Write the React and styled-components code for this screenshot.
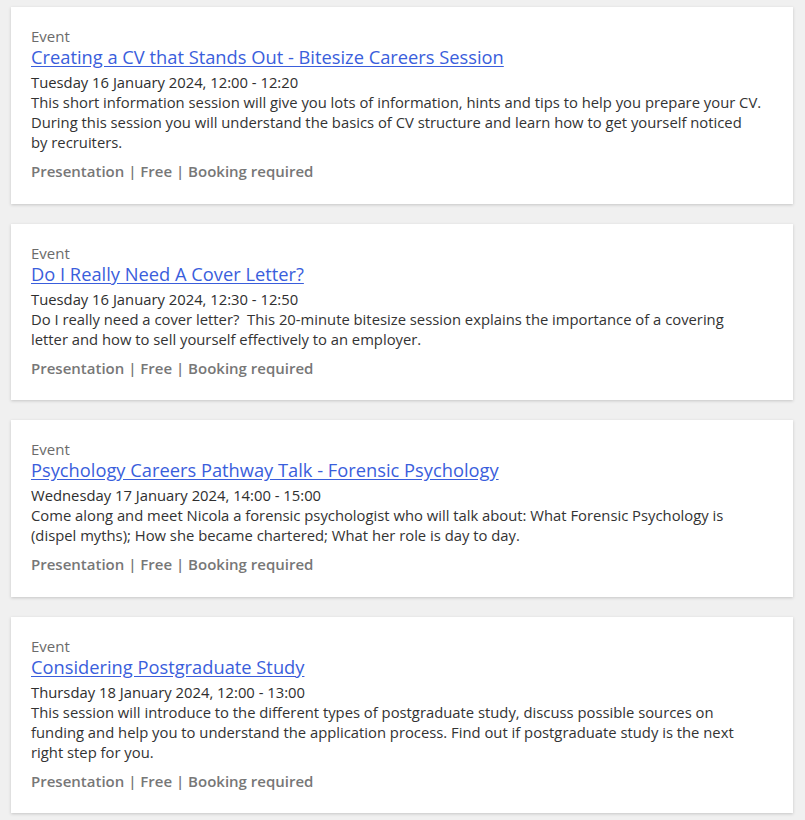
import React from "react";
import styled, { createGlobalStyle } from "styled-components";

const GlobalStyle = createGlobalStyle`
    body {
        margin: 0;
        background-color: #f0f0f0;
        font-family: "Open Sans", "Liberation Sans", sans-serif;
    }
`

const List = styled.main`
    display: flex;
    flex-direction: column;
    gap: 20px;
    padding: 7px 12px 7px 11px;
`

const Card = styled.article`
    background-color: #fff;
    padding: 19px 31.5px 22.5px 20px;
    box-shadow: 0 1px 3px rgba(0, 0, 0, 0.18);
`

const Kind = styled.div`
    font-size: 15px;
    line-height: 20px;
    color: #6b6b6b;
`

const Title = styled.a`
    display: block;
    font-size: 18.3px;
    line-height: 22px;
    color: #3a5edc;
    text-decoration: underline;
    text-underline-offset: 2px;
`

const When = styled.div`
    margin-top: 4px;
    font-size: 14.8px;
    line-height: 20px;
    color: #2e2e2e;
`

const Summary = styled.p`
    margin: 0;
    font-size: 14.8px;
    line-height: 20px;
    color: #333;
`

const Tags = styled.div`
    margin-top: 9px;
    font-size: 15px;
    line-height: 20px;
    font-weight: 600;
    color: #777;
`

const events = [
    {
        title: "Creating a CV that Stands Out - Bitesize Careers Session",
        when: "Tuesday 16 January 2024, 12:00 - 12:20",
        summary: "This short information session will give you lots of information, hints and tips to help you prepare your CV. During this session you will understand the basics of CV structure and learn how to get yourself noticed by recruiters.",
    },
    {
        title: "Do I Really Need A Cover Letter?",
        when: "Tuesday 16 January 2024, 12:30 - 12:50",
        summary: "Do I really need a cover letter?\u00a0 This 20-minute bitesize session explains the importance of a covering letter and how to sell yourself effectively to an employer.",
    },
    {
        title: "Psychology Careers Pathway Talk - Forensic Psychology",
        when: "Wednesday 17 January 2024, 14:00 - 15:00",
        summary: "Come along and meet Nicola a forensic psychologist who will talk about: What Forensic Psychology is (dispel myths); How she became chartered; What her role is day to day.",
    },
    {
        title: "Considering Postgraduate Study",
        when: "Thursday 18 January 2024, 12:00 - 13:00",
        summary: "This session will introduce to the different types of postgraduate study, discuss possible sources on funding and help you to understand the application process. Find out if postgraduate study is the next right step for you.",
    },
]

function EventCard({ event }) {
    return (
        <Card>
            <Kind>Event</Kind>
            <Title href="#">{event.title}</Title>
            <When>{event.when}</When>
            <Summary>{event.summary}</Summary>
            <Tags>Presentation | Free | Booking required</Tags>
        </Card>
    )
}

export default function App() {
    return (
        <>
            <GlobalStyle />
            <List>
                {events.map(event => <EventCard key={event.title} event={event} />)}
            </List>
        </>
    )
}
